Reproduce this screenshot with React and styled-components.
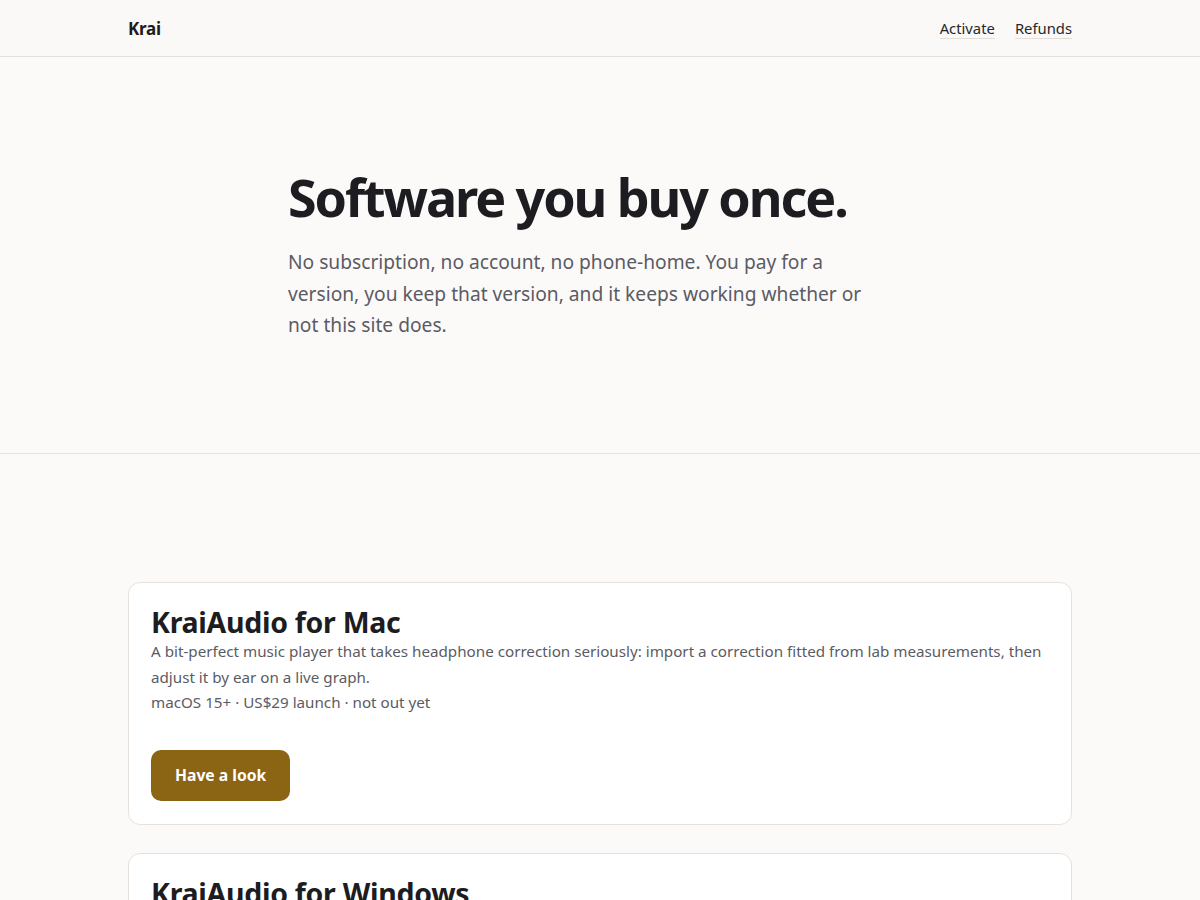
import React from "react";
import styled, { createGlobalStyle } from "styled-components";

const Global = createGlobalStyle`
  * { box-sizing: border-box; }
  html, body { margin: 0; padding: 0; }
  body {
    background: #fbfaf8;
    color: #1c1c21;
    font-family: "Noto Sans", "Open Sans", sans-serif;
    -webkit-font-smoothing: antialiased;
  }
`;

const Header = styled.header`
  height: 57px;
  border-bottom: 1px solid #e3dfdb;
  background: #faf9f7;
`;

const HeaderInner = styled.div`
  max-width: 944px;
  height: 100%;
  margin: 0 auto;
  display: flex;
  align-items: center;
  justify-content: space-between;
`;

const Logo = styled.a`
  font-size: 17px;
  font-weight: 700;
  color: #1c1c21;
  text-decoration: none;
  letter-spacing: -0.015em;
`;

const Nav = styled.nav`
  display: flex;
  gap: 20px;
`;

const NavLink = styled.a`
  font-size: 14.8px;
  color: #26262b;
  text-decoration: none;
  border-bottom: 1px solid #e2ddd8;
  line-height: 20px;
`;

const Hero = styled.section`
  border-bottom: 1px solid #ecdfdf;
  padding: 109px 0 112px;
`;

const HeroInner = styled.div`
  max-width: 624px;
  margin: 0 auto;
`;

const Headline = styled.h1`
  margin: 0 0 18px;
  font-size: 52px;
  line-height: 62px;
  font-weight: 700;
  letter-spacing: -0.04em;
  color: #1c1c21;
`;

const Lede = styled.p`
  margin: 0;
  max-width: 600px;
  font-size: 19.2px;
  line-height: 31.5px;
  color: #5b5b64;
`;

const Products = styled.section`
  background: #fcfaf9;
  padding: 128px 0 60px;
`;

const ProductList = styled.div`
  max-width: 944px;
  margin: 0 auto;
  display: flex;
  flex-direction: column;
  gap: 28px;
`;

const Card = styled.article`
  background: #ffffff;
  border: 1px solid #e6e1dd;
  border-radius: 12px;
  padding: 23px 22px 23px;
`;

const CardTitle = styled.h2`
  margin: 0;
  font-size: 28.5px;
  line-height: 32px;
  font-weight: 700;
  letter-spacing: -0.01em;
  color: #1c1c21;
`;

const CardText = styled.p`
  margin: 0;
  font-size: 15.2px;
  line-height: ${(p) => (p.$meta ? "24px" : "26px")};
  color: #5b5b64;
`;

const Button = styled.a`
  display: inline-flex;
  align-items: center;
  justify-content: center;
  margin-top: 36px;
  height: 51px;
  padding: 0 24px;
  border-radius: 10px;
  background: #8b6414;
  color: #ffffff;
  font-size: 15.7px;
  font-weight: 700;
  text-decoration: none;
`;

const products = [
  {
    title: "KraiAudio for Mac",
    desc:
      "A bit-perfect music player that takes headphone correction seriously: import a correction fitted from lab measurements, then adjust it by ear on a live graph.",
    meta: "macOS 15+ · US$29 launch · not out yet",
  },
  {
    title: "KraiAudio for Windows",
    desc:
      "The same player and the same correction engine, built for Windows, with exclusive WASAPI output so nothing in the system mixer touches your signal.",
    meta: "Windows 10+ · US$29 launch · not out yet",
  },
];

export default function App() {
  return (
    <>
      <Global />
      <Header>
        <HeaderInner>
          <Logo href="#">Krai</Logo>
          <Nav>
            <NavLink href="#">Activate</NavLink>
            <NavLink href="#">Refunds</NavLink>
          </Nav>
        </HeaderInner>
      </Header>
      <Hero>
        <HeroInner>
          <Headline>Software you buy once.</Headline>
          <Lede>
            No subscription, no account, no phone-home. You pay for a version,
            you keep that version, and it keeps working whether or not this
            site does.
          </Lede>
        </HeroInner>
      </Hero>
      <Products>
        <ProductList>
          {products.map((p) => (
            <Card key={p.title}>
              <CardTitle>{p.title}</CardTitle>
              <CardText>{p.desc}</CardText>
              <CardText $meta>{p.meta}</CardText>
              <Button href="#">Have a look</Button>
            </Card>
          ))}
        </ProductList>
      </Products>
    </>
  );
}
